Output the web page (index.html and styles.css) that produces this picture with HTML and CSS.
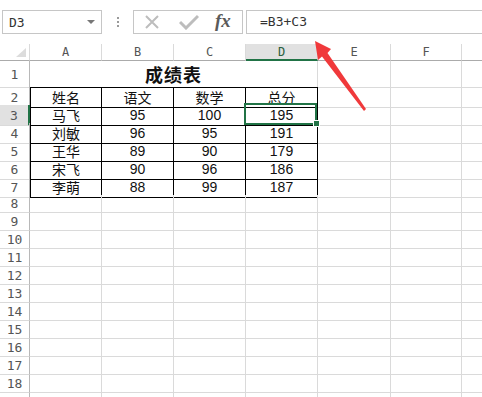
FILE: index.html
```html
<!DOCTYPE html>
<html lang="zh-CN">
<head>
    <meta charset="UTF-8">
    <title>成绩表</title>
    <link rel="stylesheet" href="styles.css">
</head>
<body>
    <div class="formula-bar">
        <div class="name-box">
            <span>D3</span>
            <span class="dropdown"></span>
        </div>
        <div class="grip"><i></i><i></i><i></i></div>
        <div class="fx-buttons">
            <svg class="btn-icon" width="16" height="16" viewBox="0 0 16 16">
                <path d="M2 2 L14 14 M14 2 L2 14" stroke="#bdbdbd" stroke-width="2" fill="none"/>
            </svg>
            <svg class="btn-icon" width="20" height="16" viewBox="0 0 20 16">
                <path d="M1 8 L7 14 L19 2" stroke="#bdbdbd" stroke-width="3" fill="none"/>
            </svg>
            <span class="fx">fx</span>
        </div>
        <div class="formula-input">=B3+C3</div>
    </div>

    <div class="sheet" id="sheet">
        <div class="row head-row">
            <div class="corner"><span class="corner-mark"></span></div>
            <div class="col-head">A</div>
            <div class="col-head">B</div>
            <div class="col-head">C</div>
            <div class="col-head active">D</div>
            <div class="col-head">E</div>
            <div class="col-head">F</div>
            <div class="col-head"></div>
        </div>
        <div class="row title-row">
            <div class="row-head">1</div>
            <div class="cell merged">成绩表</div>
            <div class="cell"></div>
            <div class="cell"></div>
            <div class="cell"></div>
        </div>
        <div class="row">
            <div class="row-head">2</div>
            <div class="cell grade first">姓名</div>
            <div class="cell grade">语文</div>
            <div class="cell grade">数学</div>
            <div class="cell grade">总分</div>
            <div class="cell"></div><div class="cell"></div><div class="cell"></div>
        </div>
        <div class="row">
            <div class="row-head active">3</div>
            <div class="cell grade first">马飞</div>
            <div class="cell grade">95</div>
            <div class="cell grade">100</div>
            <div class="cell grade selected">195</div>
            <div class="cell"></div><div class="cell"></div><div class="cell"></div>
        </div>
        <div class="row">
            <div class="row-head">4</div>
            <div class="cell grade first">刘敏</div>
            <div class="cell grade">96</div>
            <div class="cell grade">95</div>
            <div class="cell grade">191</div>
            <div class="cell"></div><div class="cell"></div><div class="cell"></div>
        </div>
        <div class="row">
            <div class="row-head">5</div>
            <div class="cell grade first">王华</div>
            <div class="cell grade">89</div>
            <div class="cell grade">90</div>
            <div class="cell grade">179</div>
            <div class="cell"></div><div class="cell"></div><div class="cell"></div>
        </div>
        <div class="row">
            <div class="row-head">6</div>
            <div class="cell grade first">宋飞</div>
            <div class="cell grade">90</div>
            <div class="cell grade">96</div>
            <div class="cell grade">186</div>
            <div class="cell"></div><div class="cell"></div><div class="cell"></div>
        </div>
        <div class="row">
            <div class="row-head">7</div>
            <div class="cell grade first">李萌</div>
            <div class="cell grade">88</div>
            <div class="cell grade">99</div>
            <div class="cell grade">187</div>
            <div class="cell"></div><div class="cell"></div><div class="cell"></div>
        </div>
    </div>

    <svg class="arrow" width="482" height="397" viewBox="0 0 482 397">
        <polygon points="315,41 331,49 327.5,53 366,109 364,111 322,56.5 318,60" fill="#f0393b"/>
    </svg>

    <script>
        // empty rows 8..18, plus the edge of 19 at the bottom
        var sheet = document.getElementById('sheet');
        for (var r = 8; r <= 19; r++) {
            var row = document.createElement('div');
            row.className = 'row';
            var html = '<div class="row-head">' + (r < 19 ? r : '') + '</div>';
            for (var c = 0; c < 7; c++) {
                html += '<div class="cell"></div>';
            }
            row.innerHTML = html;
            sheet.appendChild(row);
        }
    </script>
</body>
</html>
```

FILE: styles.css
```css
body {
    margin: 0;
    background-color: #fff;
    font-family: "DejaVu Sans Mono", "Noto Sans CJK SC", monospace;
    color: #222;
    overflow: hidden;
    position: relative;
    width: 482px;
    height: 397px;
}
.formula-bar {
    display: flex;
    align-items: center;
    height: 24px;
    margin: 10px 0;
    padding-left: 2px;
}
.name-box {
    width: 100px;
    height: 24px;
    box-sizing: border-box;
    border: 1px solid #c6c6c6;
    display: flex;
    align-items: center;
    justify-content: space-between;
    padding: 0 6px 0 6px;
    font-size: 13px;
    color: #333;
}
.dropdown {
    width: 0;
    height: 0;
    border-left: 4px solid transparent;
    border-right: 4px solid transparent;
    border-top: 4px solid #777;
}
.grip {
    width: 31px;
    display: flex;
    flex-direction: column;
    align-items: center;
    gap: 2px;
}
.grip i {
    width: 2px;
    height: 2px;
    background-color: #9a9a9a;
}
.fx-buttons {
    width: 110px;
    height: 24px;
    box-sizing: border-box;
    border: 1px solid #c6c6c6;
    display: flex;
    align-items: center;
    padding-left: 10px;
}
.btn-icon {
    margin-right: 19px;
}
.btn-icon + .btn-icon {
    margin-right: 16px;
}
.fx {
    font-family: "Liberation Serif", serif;
    font-style: italic;
    font-weight: bold;
    font-size: 19px;
    color: #5a5a5a;
    margin-top: -2px;
}
.formula-input {
    flex: 1;
    height: 24px;
    box-sizing: border-box;
    margin-left: 3px;
    margin-right: -4px;
    border: 1px solid #c6c6c6;
    padding-left: 13px;
    font-size: 13px;
    line-height: 22px;
    color: #333;
}
.sheet {
    display: flex;
    flex-direction: column;
}
.row {
    display: grid;
    grid-template-columns: 30px 72px 72px 72px 72px 73px 71px 40px;
    height: 18px;
}
.row > div {
    box-sizing: border-box;
    border-right: 1px solid #dadada;
    border-bottom: 1px solid #dadada;
    display: flex;
    align-items: center;
    justify-content: center;
}
.head-row {
    height: 17px;
}
.head-row > div {
    border-bottom-color: #ababab;
    font-size: 12px;
    color: #555;
}
.corner {
    position: relative;
}
.corner-mark {
    position: absolute;
    right: 3px;
    bottom: 3px;
    width: 10px;
    height: 9px;
    background-color: #dcdcdc;
    clip-path: polygon(100% 0, 100% 100%, 0 100%);
}
.col-head.active {
    background-color: #e1e1e1;
    border-bottom: 2px solid #217346;
    color: #2b5f3f;
}
.row-head {
    font-size: 13px;
    color: #555;
    border-right-color: #b8b8b8 !important;
}
.row-head.active {
    background-color: #e1e1e1;
    border-right: 2px solid #217346 !important;
}
.title-row {
    height: 26px;
}
.cell {
    font-family: "Liberation Sans", "Noto Sans CJK SC", sans-serif;
    font-size: 14px;
}
.merged {
    grid-column: span 4;
    font-family: "Noto Sans CJK SC", sans-serif;
    font-weight: bold;
    font-size: 18px;
    letter-spacing: 1px;
    border-bottom-color: #000 !important;
    color: #111;
}
.grade {
    border-right-color: #000 !important;
    border-bottom-color: #000 !important;
    color: #111;
}
.grade.first {
    border-left: 1px solid #000;
}
.selected {
    position: relative;
}
.selected::after {
    content: "";
    position: absolute;
    left: -2px;
    top: -2px;
    right: 0;
    bottom: 0;
    border: 2px solid #217346;
}
.selected::before {
    content: "";
    position: absolute;
    right: -3px;
    bottom: -2px;
    width: 5px;
    height: 5px;
    background-color: #217346;
    border: 1px solid #fff;
    z-index: 1;
}
.arrow {
    position: absolute;
    left: 0;
    top: 0;
    pointer-events: none;
}
```
